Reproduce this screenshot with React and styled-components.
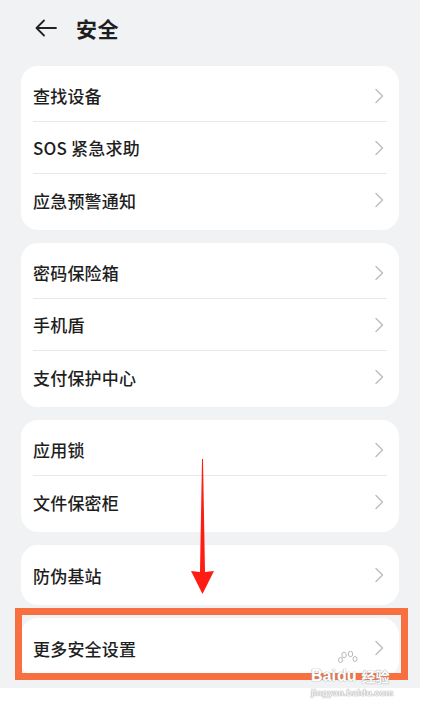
import React from 'react';
import styled, { createGlobalStyle } from 'styled-components';

const GlobalStyle = createGlobalStyle`
    html, body {
        margin: 0;
        padding: 0;
        background: #ffffff;
    }
    body {
        font-family: "Noto Sans CJK SC", "Noto Sans", sans-serif;
        color: #1e1e1e;
    }
`;

const Page = styled.div`
    position: relative;
    width: 427px;
    height: 712px;
    background: #ffffff;
    overflow: hidden;
`;

const Screen = styled.div`
    width: 420px;
    height: 688px;
    background: #f1f2f4;
    box-sizing: border-box;
    padding: 0 21px;
    display: flex;
    flex-direction: column;
    gap: 13px;
`;

const Header = styled.header`
    display: flex;
    align-items: center;
    gap: 17px;
    height: 56px;
    padding-left: 12px;
    margin-bottom: -3px;
`;

const BackButton = styled.button`
    display: flex;
    align-items: center;
    justify-content: center;
    width: 26px;
    height: 26px;
    padding: 0;
    border: none;
    background: none;
    color: #222;
`;

const Title = styled.h1`
    margin: 0;
    font-size: 21px;
    font-weight: 700;
    letter-spacing: 0.5px;
    color: #1e1e1e;
`;

const Card = styled.section`
    background: #ffffff;
    border-radius: 17px;
    padding: 4px 15px 4px 12px;
`;

const Row = styled.div`
    display: flex;
    align-items: center;
    justify-content: space-between;
    height: 52px;
    box-sizing: border-box;
    border-bottom: ${(p) => (p.$last ? 'none' : '1px solid #e8e8ea')};
    margin-right: -3px;
    padding-right: 3px;
`;

const Label = styled.span`
    font-size: 17px;
    font-weight: 500;
    color: #1e1e1e;
    letter-spacing: 0.2px;
`;

const Chevron = () => (
    <svg width="10" height="16" viewBox="0 0 10 16" fill="none">
        <path d="M2 1.5 L8.5 8 L2 14.5" stroke="#bfbfc2" strokeWidth="1.5" strokeLinecap="round" strokeLinejoin="round" />
    </svg>
);

const Highlight = styled.div`
    position: absolute;
    left: 15px;
    top: 608px;
    width: 393px;
    height: 72px;
    box-sizing: border-box;
    border: 7px solid #f8703f;
    pointer-events: none;
`;

const ArrowMark = styled.svg`
    position: absolute;
    left: 190px;
    top: 458px;
    pointer-events: none;
`;

const Watermark = styled.div`
    position: absolute;
    left: 311px;
    top: 654px;
    width: 100px;
    display: flex;
    flex-direction: column;
    align-items: flex-start;
    white-space: nowrap;
    pointer-events: none;
    color: #ffffff;
    font-family: "Liberation Sans", sans-serif;
    font-weight: 700;
    text-shadow: 0 0 1px #9a9a9a, 0 0 1px #9a9a9a;
`;

const MarkTop = styled.div`
    display: flex;
    align-items: flex-end;
    height: 30px;
    font-size: 16px;
    line-height: 16px;
`;

const MarkDu = styled.span`
    position: relative;
    display: inline-block;
    margin-left: 1px;

    svg {
        position: absolute;
        left: 1px;
        top: -17px;
    }
`;

const MarkCn = styled.span`
    margin-left: 5px;
    font-family: "Noto Sans CJK SC", sans-serif;
    font-size: 14px;
    line-height: 16px;
`;

const MarkUrl = styled.span`
    font-size: 9px;
    line-height: 10px;
    font-weight: 700;
    margin-top: 4px;
    letter-spacing: 0.2px;
    color: #f6f6f6;
    text-shadow: 0 0 1px #b0b0b0, 0 0 1px #b0b0b0, 0 0 1px #b0b0b0;
`;

const Paw = () => (
    <svg width="20" height="18" viewBox="0 0 20 18" fill="#ffffff" stroke="#b0b0b0" strokeWidth="0.9">
        <ellipse cx="6" cy="4" rx="2.2" ry="2.8" />
        <ellipse cx="12.5" cy="3" rx="2.2" ry="2.8" />
        <ellipse cx="17" cy="8" rx="2" ry="2.5" />
        <ellipse cx="2.5" cy="9" rx="2" ry="2.5" />
    </svg>
);

const groups = [
    ['查找设备', 'SOS 紧急求助', '应急预警通知'],
    ['密码保险箱', '手机盾', '支付保护中心'],
    ['应用锁', '文件保密柜'],
    ['防伪基站'],
    ['更多安全设置'],
];

export default function App() {
    return (
        <Page>
            <GlobalStyle />
            <Screen>
                <Header>
                    <BackButton aria-label="返回">
                        <svg width="24" height="24" viewBox="0 0 24 24" fill="none">
                            <path d="M22 12 H3 M10 4.5 L2.5 12 L10 19.5" stroke="#222" strokeWidth="1.8" strokeLinecap="round" strokeLinejoin="round" />
                        </svg>
                    </BackButton>
                    <Title>安全</Title>
                </Header>
                {groups.map((items, gi) => (
                    <Card key={gi}>
                        {items.map((label, i) => (
                            <Row key={label} $last={i === items.length - 1}>
                                <Label>{label}</Label>
                                <Chevron />
                            </Row>
                        ))}
                    </Card>
                ))}
            </Screen>
            <ArrowMark width="26" height="137" viewBox="0 0 26 137">
                <path d="M12 1 L13 1 L15 114 L24 113 L12.5 136 L1 113 L10 114 Z" fill="#ff1c12" />
            </ArrowMark>
            <Highlight />
            <Watermark>
                <MarkTop>
                    <span>Bai</span>
                    <MarkDu>
                        <Paw />
                        du
                    </MarkDu>
                    <MarkCn>经验</MarkCn>
                </MarkTop>
                <MarkUrl>jingyan.baidu.com</MarkUrl>
            </Watermark>
        </Page>
    );
}
